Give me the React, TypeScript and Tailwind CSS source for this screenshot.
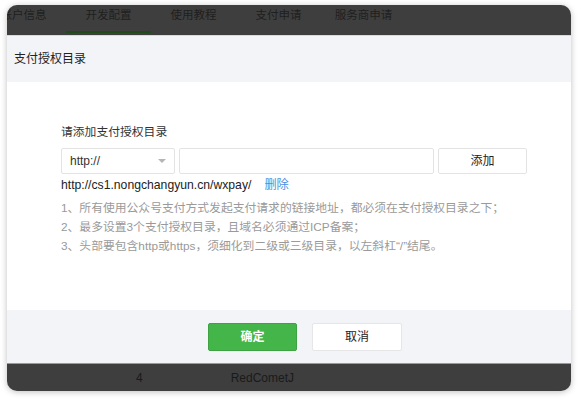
import React from 'react';

const font = { fontFamily: '"Liberation Sans", "Noto Sans CJK SC", sans-serif' };

const tabs = ['账户信息', '开发配置', '使用教程', '支付申请', '服务商申请'];

const notes = [
  '1、所有使用公众号支付方式发起支付请求的链接地址，都必须在支付授权目录之下；',
  '2、最多设置3个支付授权目录，且域名必须通过ICP备案；',
  '3、头部要包含http或https，须细化到二级或三级目录，以左斜杠“/”结尾。',
];

export default function App() {
  return (
    <div className="w-[578px] h-[400px] bg-white pt-[5px] px-[7px]" style={font}>
      <div className="w-[564px] h-[386px] rounded-[10px] bg-[#3e3e3e] overflow-hidden flex flex-col shadow-[0_1px_6px_rgba(0,0,0,0.25)]">
        {/* top tabs, first one cut off */}
        <div className="h-[30px] flex items-start shrink-0 overflow-hidden">
          <div className="flex -ml-[26px]">
            {tabs.map((t, i) => (
              <div
                key={t}
                className="relative w-[85px] h-[30px] pt-[2px] text-[11.5px] leading-[16px] text-[#1f1f1f] text-center whitespace-nowrap shrink-0"
              >
                {t}
                {i === 1 && (
                  <div className="absolute left-0 right-0 bottom-[2px] h-[2px] bg-[#1f4a1a]" />
                )}
              </div>
            ))}
          </div>
        </div>
        <div className="h-px bg-[#d9d9dc] shrink-0" />

        <div className="h-[46px] bg-[#f3f4f8] flex items-center pl-[7px] text-[12px] text-[#222] shrink-0">
          支付授权目录
        </div>

        <div className="h-[228px] bg-white pl-[54px] pt-[41px] shrink-0">
          <div className="text-[11.8px] text-[#333] leading-[18px]">请添加支付授权目录</div>
          <div className="flex mt-[7px] gap-[4px] h-[26px]">
            <div className="w-[114px] border border-[#e3e3e3] rounded-[2px] flex items-center justify-between pl-[8px] pr-[8px] text-[12px] text-[#333]">
              <span>http://</span>
              <span className="w-0 h-0 border-l-[4px] border-r-[4px] border-t-[4px] border-l-transparent border-r-transparent border-t-[#b5b5b5]" />
            </div>
            <div className="w-[255px] border border-[#e3e3e3] rounded-[2px]" />
            <div className="w-[89px] border border-[#e3e3e3] rounded-[2px] flex items-center justify-center text-[12px] text-[#222]">
              添加
            </div>
          </div>
          <div className="flex items-center mt-[2px] h-[18px] text-[12.2px]">
            <span className="text-[#222]">http://cs1.nongchangyun.cn/wxpay/</span>
            <span className="ml-[13px] text-[#4a8fde]">删除</span>
          </div>
          <div className="mt-[5px] text-[11.8px] text-[#9a9a9a] leading-[19px]">
            {notes.map((n) => (
              <div key={n}>{n}</div>
            ))}
          </div>
        </div>

        <div className="h-[53px] bg-[#f3f4f8] flex items-center justify-center gap-[15px] pl-[32px] shrink-0">
          <div className="w-[89px] h-[28px] rounded-[2px] bg-[#44b549] border border-[#3da342] flex items-center justify-center text-[12px] font-bold text-white">
            确定
          </div>
          <div className="w-[90px] h-[28px] rounded-[2px] bg-white border border-[#e6e6e6] flex items-center justify-center text-[12px] text-[#222]">
            取消
          </div>
        </div>
        <div className="h-px bg-[#9a9a9a] shrink-0" />

        <div className="flex-1 flex items-center text-[12px] text-[#1a1a1a]">
          <span className="ml-[129px]">4</span>
          <span className="ml-[88px]">RedCometJ</span>
        </div>
      </div>
    </div>
  );
}
